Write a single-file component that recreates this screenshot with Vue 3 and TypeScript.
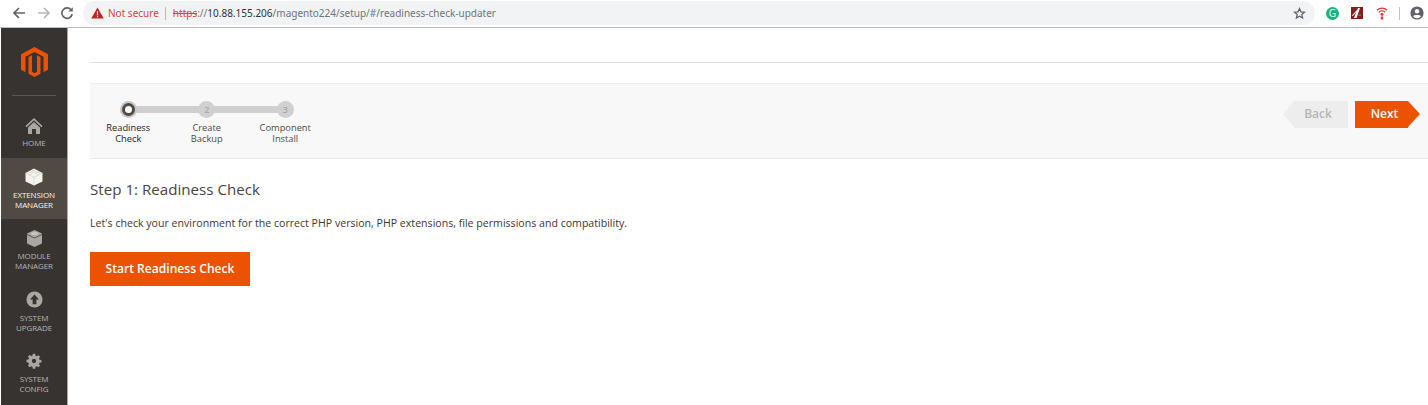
<script setup lang="ts">
interface Nav { label: string[]; icon: string; active?: boolean }
const nav: Nav[] = [
  { label: ['HOME'], icon: 'home' },
  { label: ['EXTENSION', 'MANAGER'], icon: 'brick', active: true },
  { label: ['MODULE', 'MANAGER'], icon: 'box' },
  { label: ['SYSTEM', 'UPGRADE'], icon: 'up' },
  { label: ['SYSTEM', 'CONFIG'], icon: 'gear' },
]
const steps = [
  { n: '', a: 'Readiness', b: 'Check', active: true },
  { n: '2', a: 'Create', b: 'Backup' },
  { n: '3', a: 'Component', b: 'Install' },
]
</script>

<template>
  <div class="page">
    <header class="chrome">
      <svg class="tb back" width="16" height="14" viewBox="0 0 16 14"><path d="M14 7H3M8 2 3 7l5 5" fill="none" stroke="#5f6368" stroke-width="1.7"/></svg>
      <svg class="tb fwd" width="16" height="14" viewBox="0 0 16 14"><path d="M2 7h11M8 2l5 5-5 5" fill="none" stroke="#b4b7ba" stroke-width="1.7"/></svg>
      <svg class="tb reload" width="14" height="14" viewBox="0 0 14 14"><path d="M11.4 4.2A5.2 5.2 0 1 0 12.2 8" fill="none" stroke="#5f6368" stroke-width="1.6"/><path d="M12.8 1.2v4.4H8.4z" fill="#5f6368"/></svg>
      <div class="omni">
        <svg class="warn" width="13" height="12" viewBox="0 0 13 12"><path d="M6.5 0.5 12.8 11.6H0.2z" fill="#c5221f"/><path d="M5.9 4.2h1.2v4H5.9zM5.9 9h1.2v1.2H5.9z" fill="#fff"/></svg>
        <span class="ns">Not secure</span>
        <span class="sep"></span>
        <span class="url"><s class="https">https</s><span class="grey">://</span><span class="host">10.88.155.206</span><span class="grey">/magento224/setup/#/readiness-check-updater</span></span>
        <svg class="star" width="13" height="13" viewBox="0 0 24 24"><path d="m12 3 2.7 6 6.5.7-4.9 4.3 1.4 6.4L12 17.1l-5.700 3.300 1.400-6.400-4.900-4.300 6.500-.7z" fill="none" stroke="#5f6368" stroke-width="2.300"/></svg>
      </div>
      <div class="exts">
        <span class="grammarly">G</span>
        <svg class="e-pdf" width="12" height="12" viewBox="0 0 12 12"><rect width="12" height="12" fill="#8c1c1c"/><path d="M3 11 7 1h2L5.500 11zM1 8.500 6 3l.5 1L2 9z" fill="#fff"/><path d="M7.500 7.500h2.500V9H7.500z" fill="#3c9a3c"/></svg>
        <svg class="e-wifi" width="12" height="14" viewBox="0 0 12 14"><path d="M1 4.300a7 7 0 0 1 10 0M2.800 6.300a4.500 4.500 0 0 1 6.400 0" fill="none" stroke="#e8323c" stroke-width="1.300"/><circle cx="6" cy="8.300" r="1.500" fill="#e8323c"/><path d="M4.800 10.500h2.400v3H4.800z" fill="#e8323c"/></svg>
        <span class="sep2"></span>
        <svg width="14" height="14" viewBox="0 0 14 14"><circle cx="7" cy="7" r="6.600" fill="#5f6368"/><circle cx="7" cy="5.300" r="2.200" fill="#fff"/><path d="M3 10.300c1-1.700 7-1.700 8 0a5 5 0 0 1-8 0z" fill="#fff"/></svg>
      </div>
    </header>

    <div class="body">
      <aside class="side">
        <div class="logo">
          <svg width="27" height="30" viewBox="0 0 27 32" preserveAspectRatio="none"><path d="M13.500 0 27 7.800v16.400l-4.500 2.600V10.400L13.500 5.200 4.500 10.400v16.400L0 24.200V7.800zM13.500 32l-6-3.400V10.700l3.500-2v17.700l2.500 1.500 2.500-1.500V8.700l3.500 2v17.900z" fill="#eb5202"/></svg>
        </div>
        <div class="divider"></div>
        <nav class="navlist">
          <div v-for="n in nav" :key="n.icon" class="item" :class="[n.icon, { active: n.active }]">
            <svg v-if="n.icon === 'home'" width="18" height="18" viewBox="0 0 18 18"><path d="M9 1 0.500 9l1.100 1.200L9 3.300l7.400 6.900L17.500 9zM3 10.500 9 5l6 5.500V17h-4v-5H7v5H3z" fill="#aaa6a0"/></svg>
            <svg v-else-if="n.icon === 'brick'" width="18" height="18" viewBox="0 0 18 18"><path d="M9 0.500 17.500 5v8.500L9 17.500.5 13.500V5z" fill="#f7f3eb"/><path d="M.5 5 9 9.300 17.500 5M9 9.300v8.200" fill="none" stroke="#bcd8e6" stroke-width=".7"/><ellipse cx="9" cy="3.300" rx="2" ry="1" fill="#fff" stroke="#aaa" stroke-width=".4"/><ellipse cx="5" cy="5.400" rx="2" ry="1" fill="#fff" stroke="#aaa" stroke-width=".4"/><ellipse cx="13" cy="5.400" rx="2" ry="1" fill="#fff" stroke="#aaa" stroke-width=".4"/></svg>
            <svg v-else-if="n.icon === 'box'" width="15" height="17" viewBox="0 0 15 17"><path d="M7.500 0 15 3.500v10L7.500 17 0 13.500v-10z" fill="#aaa6a0"/><path d="M0 4.500 7.500 8 15 4.500" fill="none" stroke="#373330" stroke-width=".7"/><ellipse cx="7.500" cy="3.500" rx="3.500" ry="1.500" fill="#c9c5bf"/></svg>
            <svg v-else-if="n.icon === 'up'" width="17" height="17" viewBox="0 0 18 18"><circle cx="9" cy="9" r="8.500" fill="#aaa6a0"/><path d="M9 3.800 13.800 9H11v5H7V9H4.200z" fill="#373330"/></svg>
            <svg v-else width="16" height="16" viewBox="-1 -1 20 20"><path d="M7.500 0h3l.4 2.400 1.600.7 2-1.400 2.100 2.100-1.400 2 .7 1.600 2.400.4v3l-2.400.4-.7 1.600 1.400 2-2.100 2.100-2-1.400-1.600.7-.4 2.400h-3l-.4-2.400-1.600-.7-2 1.400-2.100-2.100 1.400-2-.7-1.600L-.3 10.500v-3l2.400-.4.700-1.600-1.400-2 2.100-2.100 2 1.400 1.600-.7zM9 6.300a2.700 2.700 0 1 0 0 5.400 2.700 2.700 0 0 0 0-5.400z" fill="#aaa6a0" fill-rule="evenodd"/></svg>
            <div class="lbl"><div v-for="l in n.label" :key="l">{{ l }}</div></div>
          </div>
        </nav>
      </aside>

      <main class="main">
        <div class="rule"></div>
        <section class="wizard">
          <div class="steps">
            <div class="track"></div>
            <div v-for="s in steps" :key="s.a" class="step" :class="{ on: s.active }">
              <div class="dot"><span v-if="s.active" class="inner"></span><template v-else>{{ s.n }}</template></div>
              <div class="st">{{ s.a }}<br />{{ s.b }}</div>
            </div>
          </div>
          <div class="actions">
            <span class="btn-back">Back</span>
            <span class="btn-next">Next</span>
          </div>
        </section>
        <h2 class="title">Step 1: Readiness Check</h2>
        <p class="desc">Let's check your environment for the correct PHP version, PHP extensions, file permissions and compatibility.</p>
        <button class="start">Start Readiness Check</button>
      </main>
    </div>
  </div>
</template>

<style>
html, body { margin: 0; background: #fff; overflow: hidden; }
</style>

<style scoped>
.page { width: 1428px; height: 405px; font-family: "Open Sans", sans-serif; display: flex; flex-direction: column; overflow: hidden; }
.chrome { height: 27px; flex: none; border-bottom: 1px solid #bdbdbd; display: flex; align-items: center; padding-left: 11px; background: #fff; }
.tb { flex: none; margin-top: -1px; }
.back { margin-right: 9px; }
.fwd { margin-right: 8px; }
.reload { margin-right: 9px; }
.omni { width: 1232px; height: 24px; margin-top: -1px; border-radius: 12px; background: #f1f3f4; display: flex; align-items: center; padding-left: 8px; box-sizing: border-box; font-family: "Noto Sans", sans-serif; white-space: nowrap; flex: none; }
.warn { flex: none; margin-right: 4px; }
.ns { color: #d8433c; font-size: 10px; }
.sep { width: 1px; height: 13px; background: #b8b8b8; margin: 0 7px 0 6px; }
.url { font-size: 10px; }
.https { color: #d8433c; }
.grey { color: #70757a; }
.host { color: #303336; }
.star { margin-left: auto; margin-right: 9px; flex: none; }
.exts { display: flex; align-items: center; flex: 1; padding-left: 11px; margin-top: -1px; }
.e-pdf { margin-left: 12px; flex: none; }
.e-wifi { margin-left: 13px; flex: none; }
.sep2 { width: 1px; height: 13px; background: #c4c4c4; margin: 0 10px 0 11px; flex: none; }
.grammarly { width: 13px; height: 13px; border-radius: 50%; background: #15b67a; color: #fff; font-size: 10px; line-height: 13px; text-align: center; font-weight: 400; flex: none; }
.body { flex: 1; display: flex; min-height: 0; }
.side { width: 66px; margin-left: 1px; flex: none; background: #373330; border-right: 1px solid #aaa; overflow: hidden; }
.logo { height: 48px; padding-top: 19px; display: flex; justify-content: center; }
.divider { height: 1px; background: #5a5551; margin: 0 11px; }
.navlist { margin-top: 21px; }
.item { display: flex; flex-direction: column; align-items: center; color: #b8b4ae; font-size: 8px; line-height: 10px; height: 61px; box-sizing: border-box; }
.item .lbl { text-align: center; margin-top: 4px; letter-spacing: -.1px; }
.item.home { height: 41px; }
.item.home .lbl { margin-top: 3px; }
.item.active { background: #514943; color: #f7f3eb; padding-top: 10px; }
.item.box { padding-top: 11px; height: 62px; }
.item.up { padding-top: 10px; height: 62px; }
.item.up .lbl { margin-top: 5px; }
.item.gear { padding-top: 10px; }
.item.gear .lbl { margin-top: 5px; }
.main { flex: 1; min-width: 0; padding-left: 22px; }
.rule { height: 1px; background: #e3e3e3; margin-top: 34px; }
.wizard { margin-top: 20px; height: 76px; box-sizing: border-box; background: #f8f8f8; border-top: 1px solid #eeeeee; border-bottom: 1px solid #e9e9e9; display: flex; justify-content: space-between; padding-right: 8px; }
.steps { position: relative; display: flex; margin-left: -1px; padding-top: 17px; }
.track { position: absolute; left: 39px; top: 22px; width: 157px; height: 7px; background: #cfcfcf; }
.step { width: 78.500px; position: relative; display: flex; flex-direction: column; align-items: center; color: #514943; }
.dot { width: 17px; height: 17px; border-radius: 50%; background: #d0d0d0; color: #a9a9a9; font-size: 9px; line-height: 17px; text-align: center; font-weight: 600; display: flex; align-items: center; justify-content: center; }
.step.on .dot { background: #c9c6c4; }
.inner { width: 7px; height: 7px; border-radius: 50%; background: #fff; border: 3px solid #514943; display: block; flex: none; }
.st { font-size: 9.300px; line-height: 11px; text-align: center; margin-top: 4px; white-space: nowrap; }
.step.on .st { color: #1e1a18; font-weight: 500; }
.actions { display: flex; align-items: flex-start; padding-top: 17px; }
.btn-back, .btn-next { height: 27px; font-size: 12px; font-weight: 600; line-height: 26px; text-align: center; position: relative; display: block; box-sizing: border-box; }
.btn-back { width: 54px; margin-right: 7px; margin-left: 13px; background: #ededed; color: #b5b5b5; padding-right: 6px; }
.btn-back::before { content: ""; position: absolute; left: -11px; top: 0; border-style: solid; border-width: 13.500px 11px 13.500px 0; border-color: transparent #ededed transparent transparent; }
.btn-next { width: 53px; margin-right: 12px; background: #eb5202; color: #fff; padding-left: 6px; }
.btn-next::after { content: ""; position: absolute; right: -12px; top: 0; border-style: solid; border-width: 13.500px 0 13.500px 12px; border-color: transparent transparent transparent #eb5202; }
.title { margin: 20px 0 0; font-size: 15.150px; line-height: 20px; font-weight: 400; color: #4a4440; }
.desc { margin: 17px 0 0; font-size: 10.600px; line-height: 14px; color: #41362f; }
.start { display: block; margin-top: 22px; width: 160px; height: 34px; border: 0; padding: 0 0 2px; background: #eb5202; color: #fff; font-family: inherit; font-size: 12.100px; font-weight: 600; }
</style>
